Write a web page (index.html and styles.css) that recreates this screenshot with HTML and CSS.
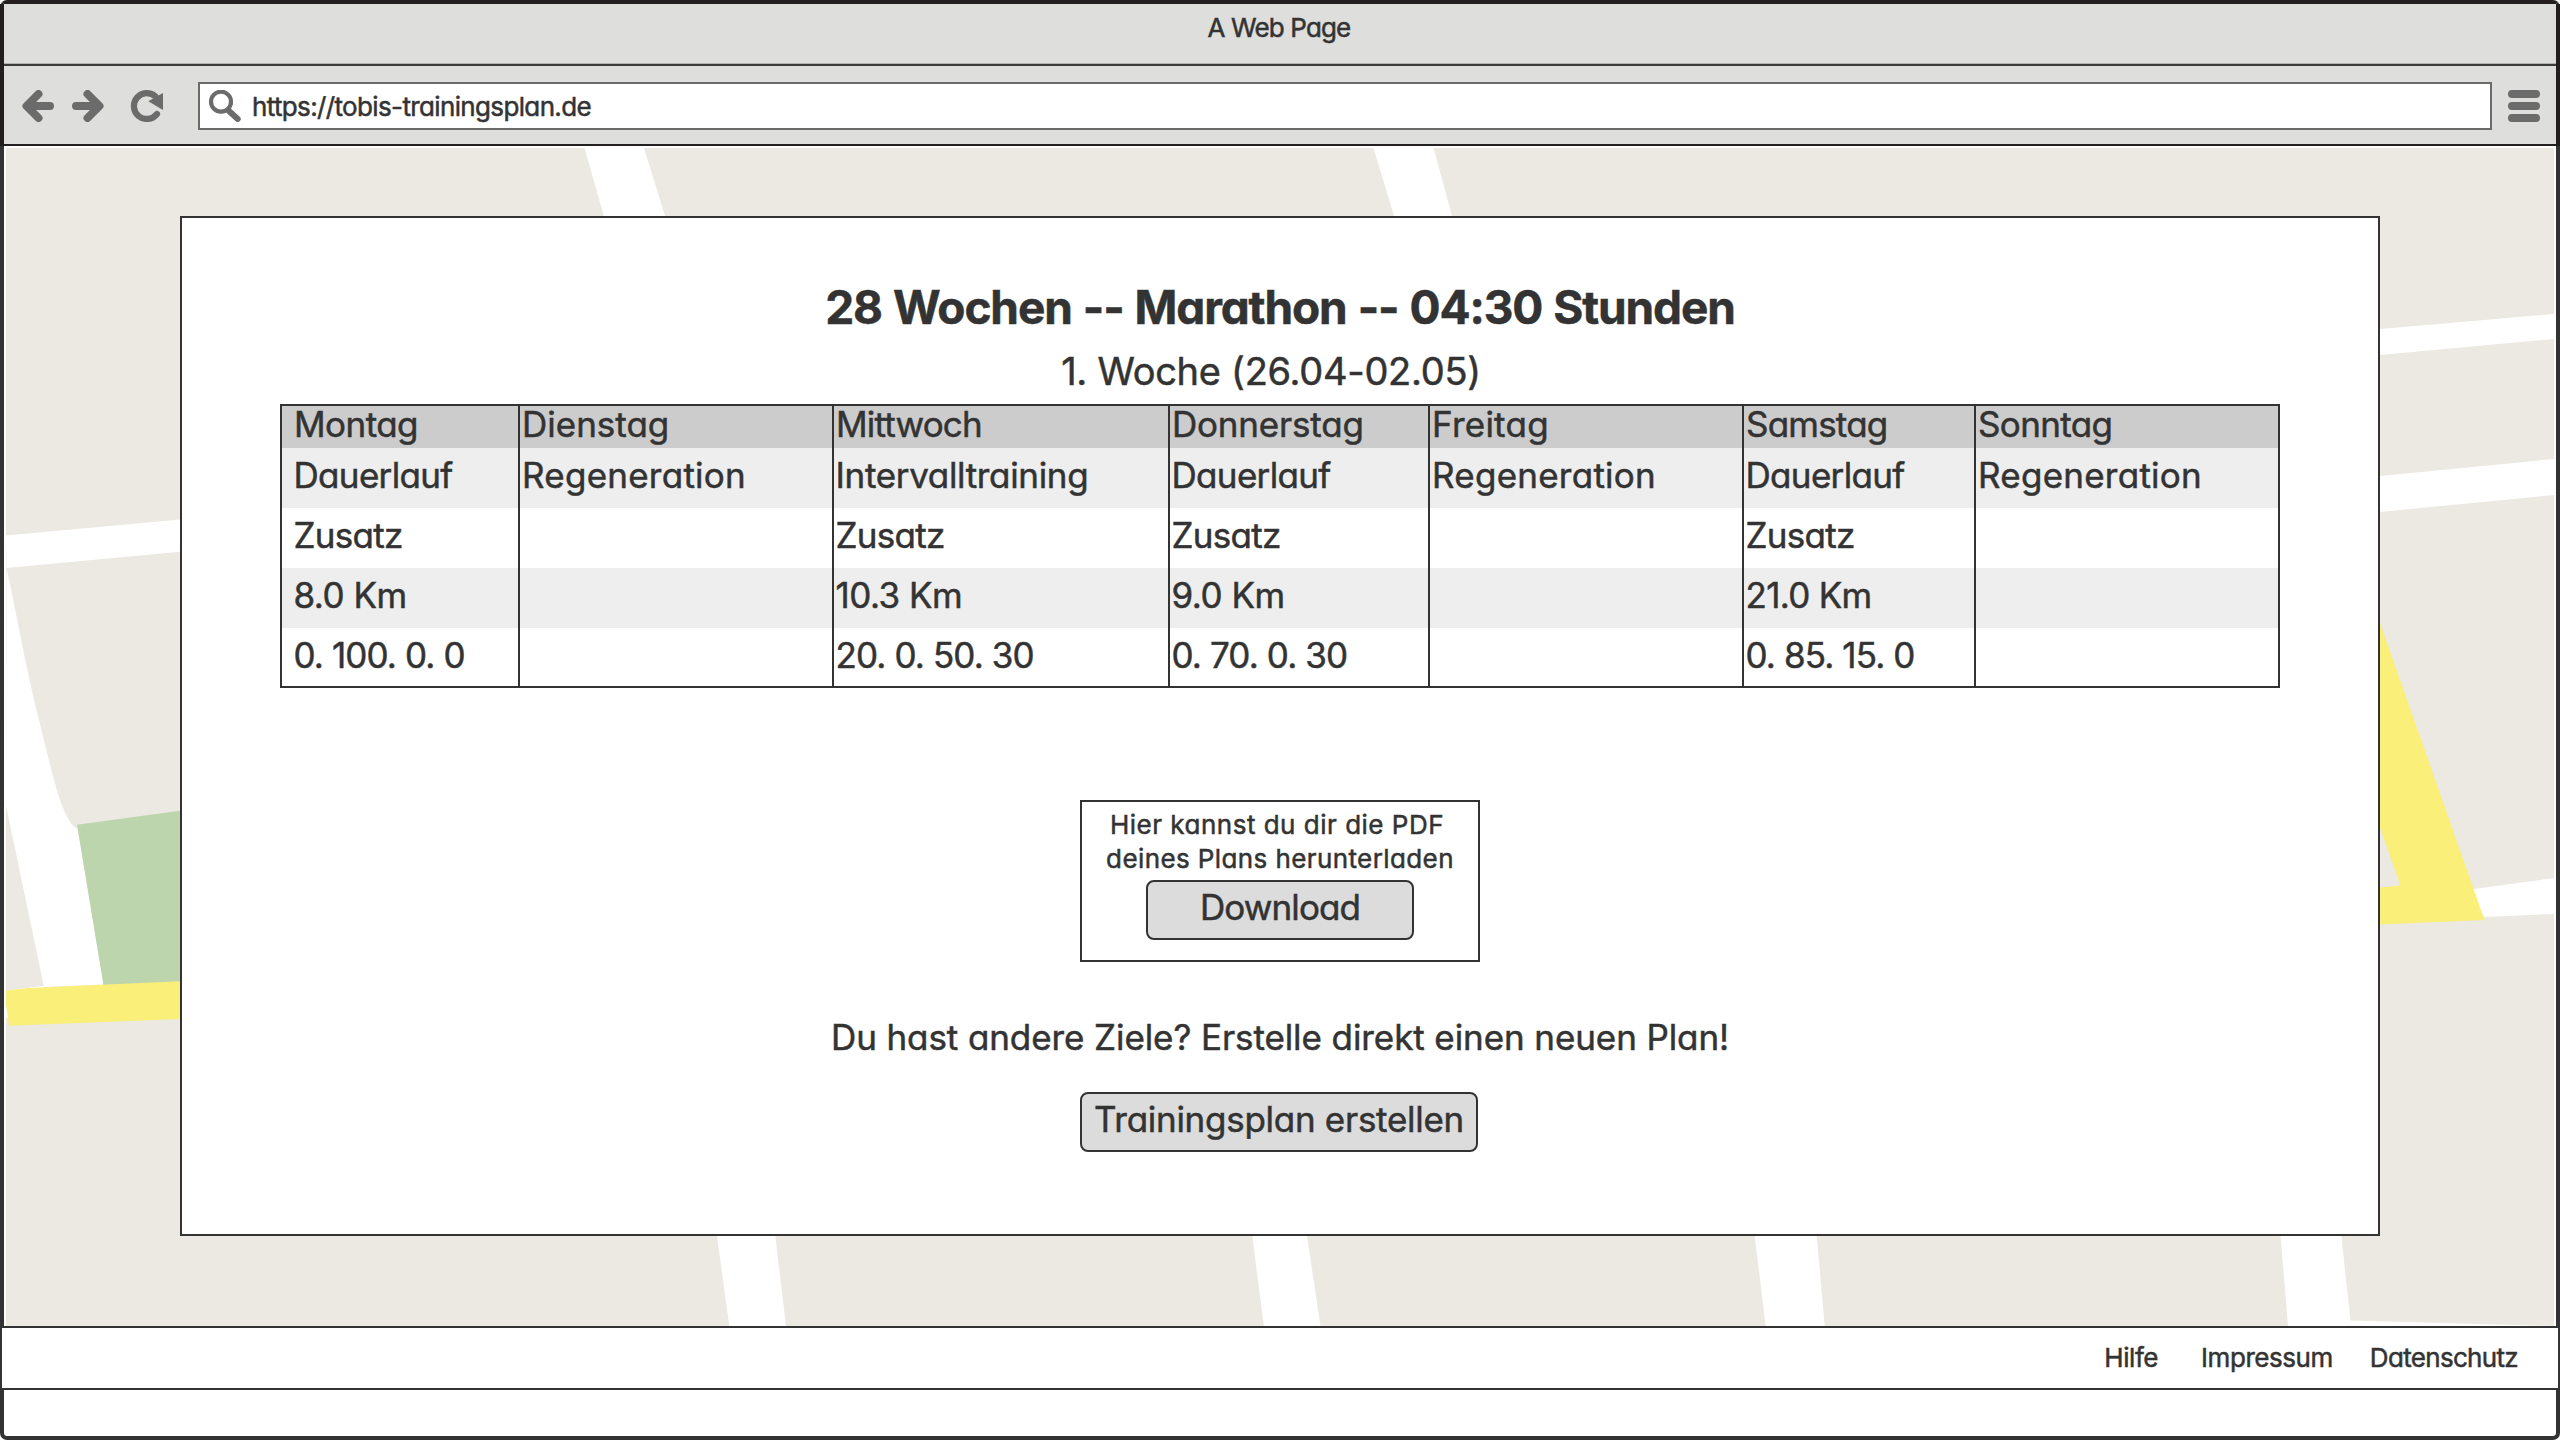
FILE: index.html
```
<!DOCTYPE html>
<html lang="de">
<head>
<meta charset="utf-8">
<title>A Web Page</title>
<link rel="stylesheet" href="styles.css">
</head>
<body>
<div class="window">
  <header class="chrome">
    <div class="titlebar"><span class="titlebar-text">A Web Page</span></div>
    <div class="toolbar">
      <svg class="icon icon-nav" viewBox="22 90 32 32"><path d="M38.500 94 26.500 106l12 12M28 106h22"/></svg>
      <svg class="icon icon-nav" viewBox="72 90 32 32"><path d="M87.500 94l12 12-12 12M98 106H76"/></svg>
      <svg class="icon icon-reload" viewBox="130 90 33 32"><path class="arc" d="M155.500 96.500A12.900 12.900 0 1 0 157 114"/><path class="head" d="M163 93v17l-14.700-8.700z"/></svg>
      <div class="address">
        <svg class="icon icon-search" viewBox="208 90 33 32"><circle cx="221" cy="101.700" r="10"/><path d="M229 111l8.700 8"/></svg>
        <span class="url">https://tobis-trainingsplan.de</span>
      </div>
      <div class="menu"><i></i><i></i><i></i></div>
    </div>
  </header>

  <main class="page">
    <svg class="map" viewBox="4 146 2552 1180">
      <rect class="land" x="6" y="148" width="2548" height="1178"/>
      <!-- streets -->
      <g class="street">
        <path d="M584.600 148H644l21 68 30 100h-60L603.800 216z"/>
        <path d="M1373.500 148h60l18.500 68 30 100h-60l-28-100z"/>
        <path d="M2380 329l174-15v25l-174 16z"/>
        <path d="M2380 476l174-17v36l-174 17z"/>
        <path d="M6 535.500l174-16v32.300L6.500 568z"/>
        <path d="M6.500 568C17 615 24 660 40 724C47 753 53 778 60 800Q69 826 78 829L103.500 984.500 44 987 6 805.500z"/>
        <path d="M6 990.500L44 985.700V1000H6zM6 1004v14h3z"/>
        <path d="M2470 889.500l84-11.500v36l-70 3z"/>
        <path d="M717 1236h58.300l10.700 90h-56.700z"/>
        <path d="M1252.300 1236h54.700l13.500 90h-56.700z"/>
        <path d="M1754.700 1236h62l8 90h-59.100z"/>
        <path d="M2280.500 1236h60.800l9.200 84.500L2554 1326H2288z"/>
      </g>
      <path class="park" d="M77 824.800L180 810.700V983L103.500 985z"/>
      <!-- main roads -->
      <path class="road" d="M6 990.500L28 988 180 981.300V1019L9 1025.700 6 1004z"/>
      <path class="road" d="M2380 623L2484.500 920 2380 924.500V887.600L2400.500 885.600 2380 827.500z"/>
    </svg>

    <section class="card">
      <h1 class="headline">28 Wochen -- Marathon -- 04:30 Stunden</h1>
      <h2 class="week">1. Woche (26.04-02.05)</h2>

      <div class="plan">
        <div class="day">
          <div class="cell name w-montag">Montag</div><div class="cell w-dauerlauf">Dauerlauf</div><div class="cell w-zusatz">Zusatz</div><div class="cell w-km">8.0 Km</div><div class="cell w-zones">0. 100. 0. 0</div>
        </div>
        <div class="day">
          <div class="cell name">Dienstag</div><div class="cell w-regeneration">Regeneration</div><div class="cell"></div><div class="cell"></div><div class="cell"></div>
        </div>
        <div class="day">
          <div class="cell name w-mittwoch">Mittwoch</div><div class="cell w-intervall">Intervalltraining</div><div class="cell w-zusatz">Zusatz</div><div class="cell w-km">10.3 Km</div><div class="cell w-zones">20. 0. 50. 30</div>
        </div>
        <div class="day">
          <div class="cell name w-donnerstag">Donnerstag</div><div class="cell w-dauerlauf">Dauerlauf</div><div class="cell w-zusatz">Zusatz</div><div class="cell w-km">9.0 Km</div><div class="cell w-zones">0. 70. 0. 30</div>
        </div>
        <div class="day">
          <div class="cell name w-freitag">Freitag</div><div class="cell w-regeneration">Regeneration</div><div class="cell"></div><div class="cell"></div><div class="cell"></div>
        </div>
        <div class="day">
          <div class="cell name w-samstag">Samstag</div><div class="cell w-dauerlauf">Dauerlauf</div><div class="cell w-zusatz">Zusatz</div><div class="cell w-km-long">21.0 Km</div><div class="cell w-zones">0. 85. 15. 0</div>
        </div>
        <div class="day">
          <div class="cell name w-sonntag">Sonntag</div><div class="cell w-regeneration">Regeneration</div><div class="cell"></div><div class="cell"></div><div class="cell"></div>
        </div>
      </div>

      <div class="download">
        <p class="download-text"><span class="line-a">Hier kannst du dir die PDF</span><span>deines Plans herunterladen</span></p>
        <button class="btn btn-download">Download</button>
      </div>

      <p class="prompt">Du hast andere Ziele? Erstelle direkt einen neuen Plan!</p>
      <button class="btn btn-create">Trainingsplan erstellen</button>
    </section>
  </main>

  <footer class="footer">
    <a class="link-help">Hilfe</a>
    <a class="link-imprint">Impressum</a>
    <a class="link-privacy">Datenschutz</a>
  </footer>
</div>
</body>
</html>
```
FILE: styles.css
```
* { box-sizing: border-box; }

body {
  margin: 0;
  background: #fff;
  color: #333;
  font-family: Inter, "Liberation Sans", sans-serif;
  font-feature-settings: "cv11";
  -webkit-text-stroke: 0.5px #333;
}

h1, h2, p { margin: 0; font-weight: 400; }

.window {
  display: flex;
  flex-direction: column;
  width: 2560px;
  height: 1440px;
  border: 4px solid #333;
  border-top-color: #231f20;
  border-radius: 7px;
  background: #fff;
}

/* Browser chrome */
.chrome {
  height: 142px;
  margin: 0 -4px;
  border: solid #231f20;
  border-width: 0 4px 2px;
  background: #dededc;
}

.titlebar {
  height: 62px;
  padding-right: 2px;
  border-bottom: 2px solid #3c3b3b;
  box-shadow: inset 0 -1px #b4b4b3;
  text-align: center;
  font-size: 26px;
  line-height: 47px;
}
.titlebar-text { letter-spacing: -0.86px; }

.toolbar {
  display: flex;
  align-items: center;
  height: 78px;
  padding: 2px 16px 0 18px;
}

.icon {
  flex: none;
  height: 32px;
  fill: none;
  stroke: #6b6b6b;
  stroke-linecap: round;
  stroke-linejoin: round;
}
.icon-nav { width: 32px; margin-right: 18px; stroke-width: 8; }
.icon-reload { width: 33px; margin: 0 35px 0 8px; stroke-width: 6.2; }
.icon-reload .head { fill: #6b6b6b; stroke: none; }
.icon-search { width: 33px; margin-right: 11px; stroke-width: 4.2; }
.icon-search path { stroke-width: 6; }

.address {
  display: flex;
  flex: 1;
  align-items: center;
  height: 48px;
  padding-left: 8px;
  border: 2px solid #6b6b6b;
  background: #fff;
}
.url { padding-top: 2px; font-size: 26px; line-height: 42px; letter-spacing: -0.64px; }

.menu {
  display: flex;
  flex-direction: column;
  gap: 4px;
  width: 32px;
  margin-left: 16px;
}
.menu i { height: 8px; border-radius: 4px; background: #6b6b6b; }

/* Page */
.page {
  display: grid;
  flex: none;
  height: 1180px;
}
.map, .card { grid-area: 1 / 1; }
.map { width: 2552px; height: 1180px; }
.land { fill: #ebe9e1; }
.street { fill: #fff; }
.park { fill: #bcd5ac; }
.road { fill: #faef78; }

.card {
  z-index: 1;
  display: flex;
  flex-direction: column;
  align-items: center;
  width: 2200px;
  height: 1020px;
  margin: 70px 0 0 176px;
  padding-top: 59px;
  border: 2px solid #333;
  background: #fff;
}

.headline {
  font-size: 46px;
  font-weight: 700;
  line-height: 60px;
  letter-spacing: -1.1px;
  word-spacing: 1.2px;
}
.week {
  height: 45px;
  margin-top: 8px;
  padding-right: 18px;
  font-size: 38px;
  line-height: 53px;
  letter-spacing: -0.28px;
}

/* Weekly plan */
.plan {
  display: grid;
  grid-template-columns: 236px 314px 336px 260px 314px 232px 304px;
  width: 2000px;
  height: 284px;
  margin-top: 14px;
  border: 2px solid #333;
  font-size: 35px;
  white-space: nowrap;
}
.day {
  display: grid;
  grid-template-rows: 42px 60px 60px 60px 58px;
  border-left: 2px solid #333;
}
.day:first-child { border-left: 0; }
.cell { padding-left: 1.5px; line-height: 55px; letter-spacing: 0; }
.day:first-child .cell { padding-left: 11.5px; }
.cell:nth-child(even) { background: #eee; }
.cell.name { padding-left: 2px; background: #ccc; line-height: 37px; }
.day:first-child .cell.name { padding-left: 12px; }

.cell.w-montag { letter-spacing: -0.55px; }
.cell.w-mittwoch { letter-spacing: -0.8px; }
.cell.w-donnerstag { letter-spacing: -0.2px; }
.cell.w-freitag { letter-spacing: 0.25px; }
.cell.w-samstag { letter-spacing: -0.8px; }
.cell.w-sonntag { letter-spacing: -0.65px; }
.cell.w-dauerlauf { letter-spacing: -0.67px; }
.cell.w-regeneration { padding-left: 2px; letter-spacing: 0.25px; }
.cell.w-intervall { letter-spacing: -0.33px; }
.cell.w-zusatz { letter-spacing: -0.7px; }
.cell.w-km { letter-spacing: -0.5px; }
.cell.w-km-long { letter-spacing: -0.7px; }
.cell.w-zones { letter-spacing: -0.88px; }

/* Download and new plan */
.download {
  display: flex;
  flex-direction: column;
  align-items: center;
  width: 400px;
  height: 162px;
  margin-top: 112px;
  padding-top: 6px;
  border: 2px solid #333;
}
.download-text {
  display: flex;
  flex-direction: column;
  align-items: center;
  font-size: 26px;
  line-height: 34px;
  letter-spacing: 0.4px;
}
.line-a { padding-right: 6px; letter-spacing: 0.5px; }

.btn {
  height: 60px;
  padding: 0 0 5px;
  border: 2px solid #333;
  border-radius: 8px;
  background: #dcdcdc;
  color: inherit;
  font: 35px/51px Inter, "Liberation Sans", sans-serif;
  font-feature-settings: inherit;
}
.btn-download { width: 268px; margin-top: 4px; letter-spacing: -0.9px; }
.btn-create { width: 398px; margin: 30px 2px 0 0; letter-spacing: -0.28px; }

.prompt {
  margin-top: 50px;
  font-size: 35px;
  line-height: 50px;
  letter-spacing: -0.09px;
}

/* Footer */
.footer {
  display: flex;
  flex: none;
  justify-content: flex-end;
  height: 64px;
  margin: 0 -4px;
  padding-right: 40px;
  border: 2px solid #333;
  background: #fff;
  font-size: 26px;
  line-height: 59px;
}
.link-help { letter-spacing: -0.44px; }
.link-imprint { margin-left: 43px; letter-spacing: -0.45px; }
.link-privacy { margin-left: 37px; letter-spacing: -0.68px; }
```
